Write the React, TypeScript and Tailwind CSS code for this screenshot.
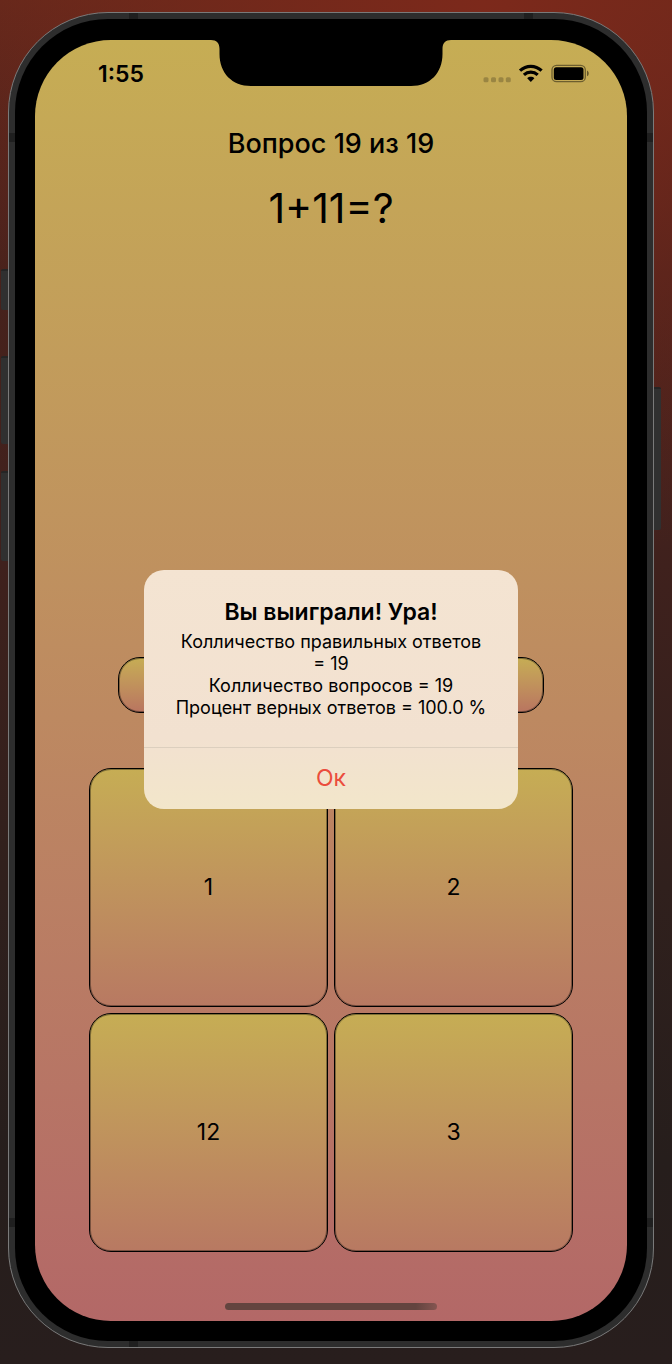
const answers = ["1", "2", "12", "3"];

function SideButtons() {
  return (
    <div aria-hidden="true">
      <span className="absolute -left-2 top-[256px] h-[41px] w-[7px] rounded-l-xs border-t-2 border-[#252525] bg-[#303030]" />
      <span className="absolute -left-2 top-[343px] h-[88px] w-[7px] rounded-l-xs border-t-2 border-[#252525] bg-[#303030]" />
      <span className="absolute -left-2 top-[458px] h-[90px] w-[7px] rounded-l-xs border-t-2 border-[#252525] bg-[#303030]" />
      <span className="absolute -right-2 top-[374px] h-[143px] w-[7px] rounded-r-xs border-t-2 border-[#252525] bg-[#303030]" />
    </div>
  );
}

function AntennaBands() {
  return (
    <div aria-hidden="true">
      <span className="absolute left-[120px] top-0 h-[6px] w-[9px] bg-[#1f1f1f]" />
      <span className="absolute right-[120px] top-0 h-[6px] w-[9px] bg-[#1f1f1f]" />
      <span className="absolute bottom-0 left-[120px] h-[6px] w-[9px] bg-[#1f1f1f]" />
      <span className="absolute left-0 top-[120px] h-[9px] w-[6px] bg-[#1f1f1f]" />
      <span className="absolute right-0 top-[120px] h-[9px] w-[6px] bg-[#1f1f1f]" />
      <span className="absolute bottom-[120px] left-0 h-[9px] w-[6px] bg-[#1f1f1f]" />
      <span className="absolute bottom-[120px] right-0 h-[9px] w-[6px] bg-[#1f1f1f]" />
    </div>
  );
}

function Notch() {
  return (
    <svg
      aria-hidden="true"
      viewBox="0 0 240 46"
      className="absolute left-1/2 top-0 h-[46px] w-[240px] -translate-x-1/2"
    >
      <path d="M0 0H240C234.500 0 231.500 3 231.500 9V14C231.500 33 219 46 200 46H40C21 46 8.500 33 8.500 14V9C8.500 3 5.500 0 0 0Z" />
    </svg>
  );
}

function StatusBar() {
  return (
    <header className="flex h-[68px] items-center justify-between pl-[63px] pr-[37px]">
      <time className="text-[23px] leading-7 font-semibold">1:55</time>
      <svg aria-hidden="true" viewBox="0 0 108 20" className="h-5 w-[108px]">
        <g fill="#000" fillOpacity="0.22">
          <rect x="1.500" y="13.300" width="5" height="5" rx="1.500" />
          <rect x="9" y="13.300" width="5" height="5" rx="1.500" />
          <rect x="16.500" y="13.300" width="5" height="5" rx="1.500" />
          <rect x="23.800" y="13.300" width="5" height="5" rx="1.500" />
        </g>
        <g fill="none" stroke="#000" strokeWidth="3.200">
          <path d="M38 6.700C44.300 0.800 53.300 0.800 59.600 6.700" />
          <path d="M41.900 10.900C45.900 7.200 51.700 7.200 55.700 10.900" />
        </g>
        <path d="M45.200 14.200C47.200 12.400 50.400 12.400 52.400 14.200L48.800 18Z" />
        <rect x="70" y="1.300" width="33.300" height="16.400" rx="4.500" fill="none" stroke="#000" strokeOpacity="0.45" strokeWidth="1.300" />
        <rect x="71.800" y="3.200" width="29.700" height="12.800" rx="2.500" />
        <path d="M105 6.500C107.300 7.400 107.300 11.400 105 12.300Z" fillOpacity="0.5" />
      </svg>
    </header>
  );
}

function ResultAlert() {
  return (
    <div className="absolute inset-0 flex items-center justify-center pt-[17px]">
      <section
        role="alertdialog"
        aria-labelledby="alert-title"
        aria-describedby="alert-message"
        className="w-[374px] overflow-hidden rounded-[20px] bg-linear-to-b from-[#f4e4d2] via-[#f2e1d0] via-70% to-[#f2e6ca] text-center"
      >
        <div className="pt-7 pb-7">
          <h2 id="alert-title" className="text-[23px] leading-7 font-semibold">
            Вы выиграли! Ура!
          </h2>
          <p id="alert-message" className="mt-[5px] text-[18px] leading-[22px] whitespace-nowrap">
            Колличество правильных ответов
            <br />= 19
            <br />
            Колличество вопросов = 19
            <br />
            Процент верных ответов = 100.0 %
          </p>
        </div>
        <button type="button" className="h-[62px] w-full border-t border-[#dccfbe] text-[23px] text-[#eb4d3d]">
          Ок
        </button>
      </section>
    </div>
  );
}

export default function App() {
  return (
    <main className="flex min-h-screen flex-col bg-[radial-gradient(circle_at_72%_0%,#7c291b_0%,#7c291b00_40%),linear-gradient(180deg,#64281b_0%,#54241c_10%,#47221c_20%,#40211d_40%,#30201d_65%,#261e1c_85%,#281e1d_100%)] pt-3 pr-[18px] pb-4 pl-2 font-['Inter','Liberation_Sans',sans-serif] text-black">
      <div className="relative flex grow flex-col rounded-[100px] border border-[#7a7a7a] bg-[#2d2d2d] p-[6px]">
        <SideButtons />
        <AntennaBands />
        <div className="flex grow flex-col rounded-[93px] bg-black px-5 pt-[21px] pb-5">
          <div className="relative flex grow flex-col overflow-hidden rounded-[76px] bg-linear-to-b from-[#c6ad54] to-[#b36867]">
            <Notch />
            <StatusBar />
            <h1 className="mt-[18px] text-center text-[27px] leading-9 font-medium">Вопрос 19 из 19</h1>
            <p className="mt-5 text-center text-[41px] leading-[52px]">1+11=?</p>
            <div className="mt-auto px-[54px]">
              <div className="px-[29px]">
                <button
                  type="button"
                  aria-label="Далее"
                  className="block h-[56px] w-full rounded-[22px] border border-black bg-linear-to-b from-[#c6ad54] to-[#b97560] shadow-[inset_0_0_0_1px_rgba(0,0,0,0.35)]"
                />
              </div>
              <div className="mt-[55px] grid grid-cols-2 gap-[6px]">
                {answers.map((answer) => (
                  <button
                    key={answer}
                    type="button"
                    className="aspect-square rounded-[22px] border border-black bg-linear-to-b from-[#c6ad54] to-[#b87962] text-[23px] shadow-[inset_0_0_0_1px_rgba(0,0,0,0.35)]"
                  >
                    {answer}
                  </button>
                ))}
              </div>
            </div>
            <div className="mx-auto mt-[51px] mb-[11px] h-[7px] w-[212px] rounded-full bg-linear-to-r from-[#63443f] from-90% to-[#855551]" />
            <ResultAlert />
          </div>
        </div>
      </div>
    </main>
  );
}
